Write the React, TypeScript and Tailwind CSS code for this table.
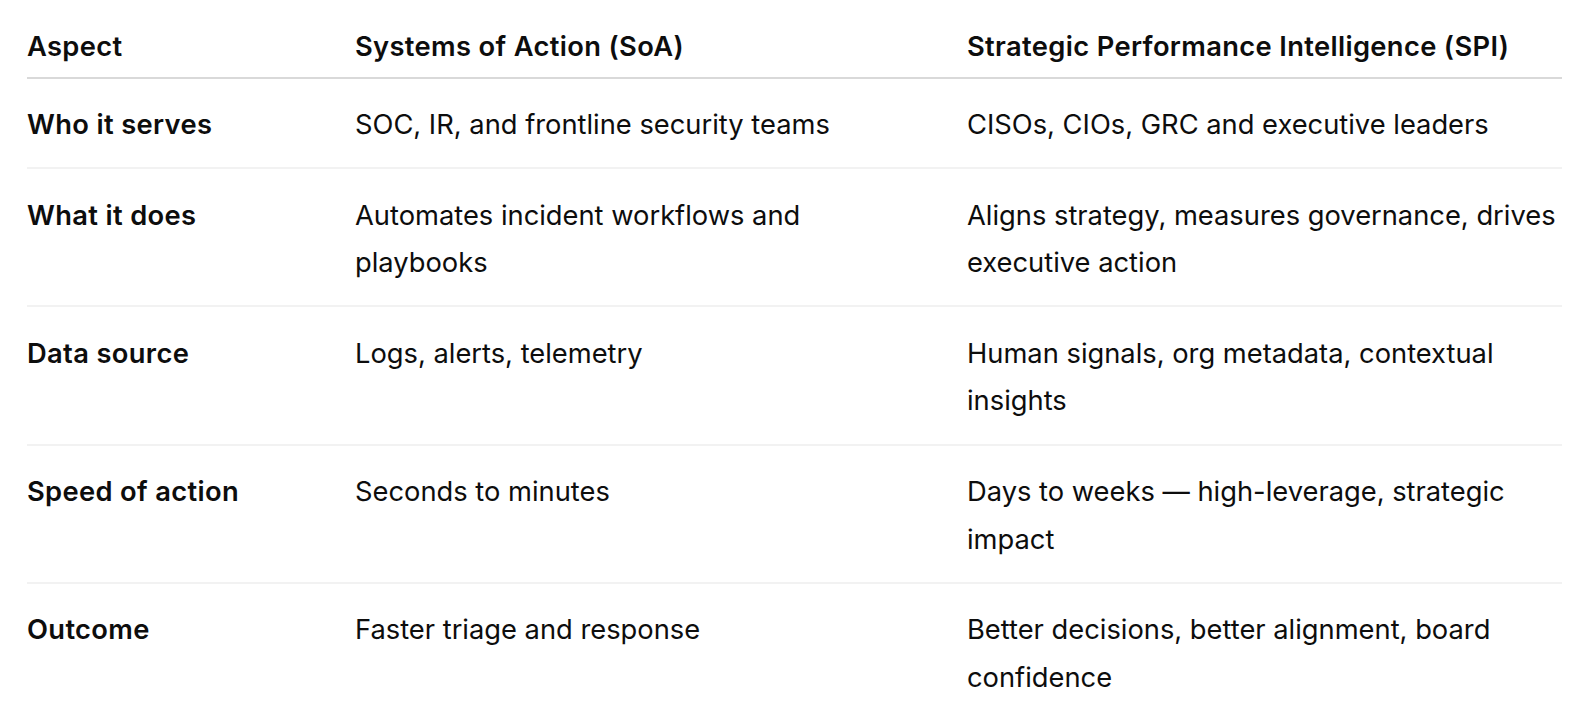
const rows: [string, string, string][] = [
  ["Who it serves", "SOC, IR, and frontline security teams", "CISOs, CIOs, GRC and executive leaders"],
  ["What it does", "Automates incident workflows and playbooks", "Aligns strategy, measures governance, drives executive action"],
  ["Data source", "Logs, alerts, telemetry", "Human signals, org metadata, contextual insights"],
  ["Speed of action", "Seconds to minutes", "Days to weeks — high-leverage, strategic impact"],
  ["Outcome", "Faster triage and response", "Better decisions, better alignment, board confidence"],
];

export default function App() {
  return (
    <main className="min-h-screen bg-white pl-[27px] pr-[33px] pt-[23px] text-[#0d0d0d] [font-family:Inter,'Noto_Sans',sans-serif]">
      <table className="w-[1535px] table-fixed border-collapse text-left text-[27.3px] leading-[47.6px]">
        <colgroup>
          <col className="w-[328px]" />
          <col className="w-[612px]" />
          <col />
        </colgroup>
        <thead>
          <tr className="border-b-2 border-[#d9d9d9]">
            <th className="pb-[6px] align-top font-semibold tracking-[0.35px]">Aspect</th>
            <th className="pb-[6px] align-top font-semibold tracking-[0.35px]">Systems of Action (SoA)</th>
            <th className="pb-[6px] align-top font-semibold tracking-[0.35px]">Strategic Performance Intelligence (SPI)</th>
          </tr>
        </thead>
        <tbody>
          {rows.map(([aspect, soa, spi], i) => (
            <tr
              key={aspect}
              className={i < rows.length - 1 ? "border-b-2 border-[#f2f2f2]" : ""}
            >
              <td className="pt-[22.5px] pb-[18.5px] pr-4 align-top font-semibold tracking-[0.35px]">{aspect}</td>
              <td className="pt-[22.5px] pb-[18.5px] pr-[56px] align-top">{soa}</td>
              <td className="pt-[22.5px] pb-[18.5px] align-top">{spi}</td>
            </tr>
          ))}
        </tbody>
      </table>
    </main>
  );
}
